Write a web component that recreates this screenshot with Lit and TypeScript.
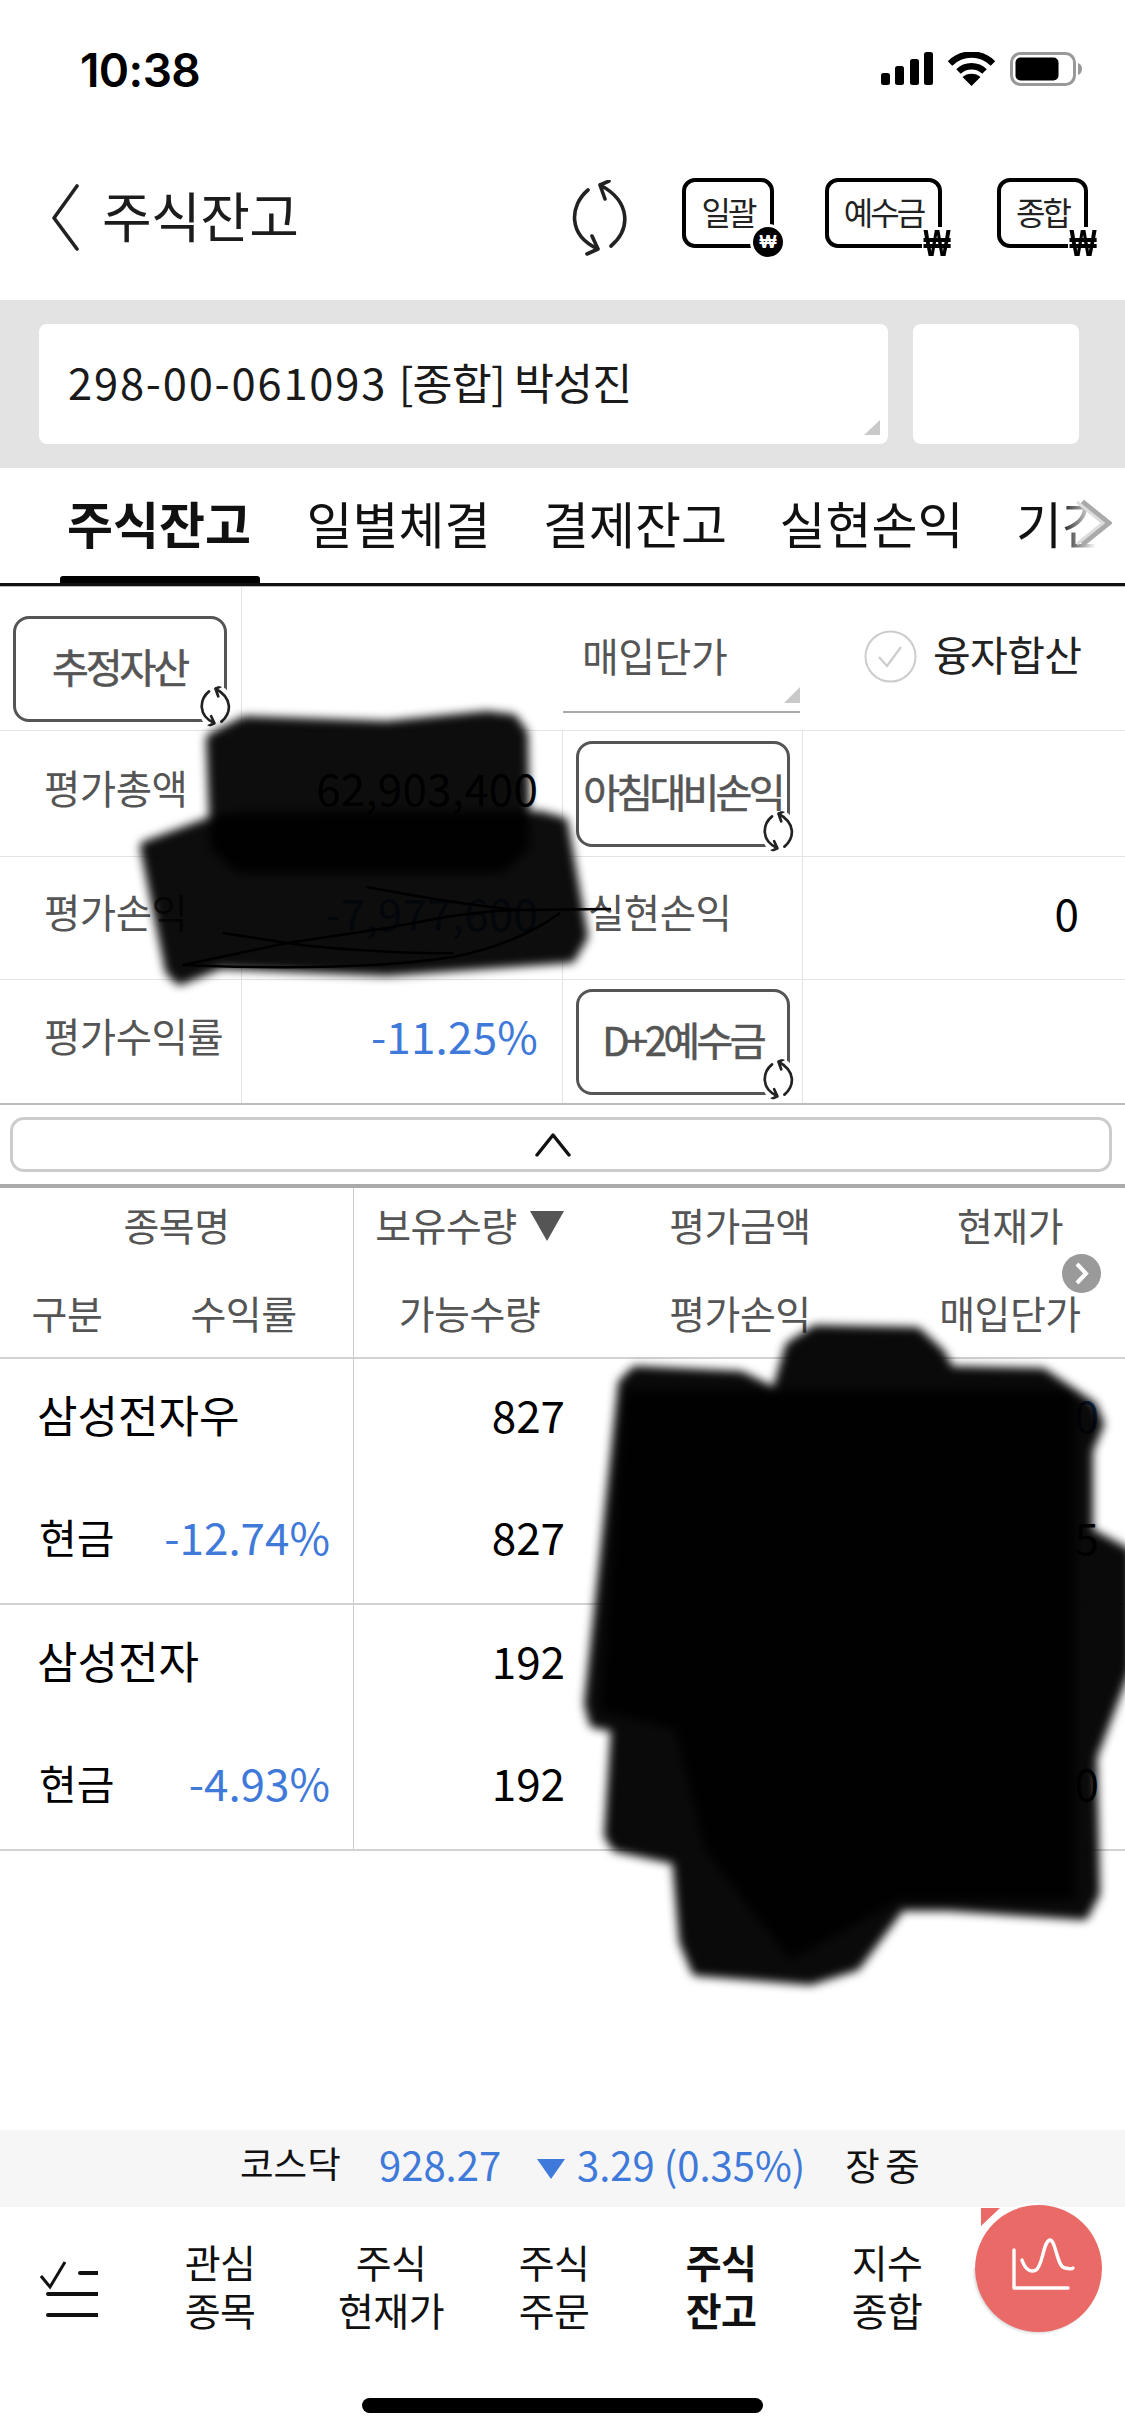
import { LitElement, html, css, svg } from "lit";
import { customElement } from "lit/decorators.js";

const refresh = svg`<path d="M16 10C-2 25-5 55 26 69M15 74L26 69L20 56M39 66C58 50 60 22 28 5M37 1L28 5L33 19" fill="none" stroke="#222" stroke-width="3.6" stroke-linecap="round" stroke-linejoin="round"/>`;

const tabs = ["주식잔고", "일별체결", "결제잔고", "실현손익", "기간손익"];
const navItems = [
  ["관심", "종목", false],
  ["주식", "현재가", false],
  ["주식", "주문", false],
  ["주식", "잔고", true],
  ["지수", "종합", false],
] as const;
const rows = [
  { name: "삼성전자우", kind: "현금", rate: "-12.74%", qty: "827", tail: ["0", "5"], blue: true },
  { name: "삼성전자", kind: "현금", rate: "-4.93%", qty: "192", tail: ["", "0"], blue: false },
];

@customElement("app-root")
export class AppRoot extends LitElement {
  static styles = css`
    :host {
      display: block;
      width: 1125px;
      height: 2436px;
      position: relative;
      overflow: hidden;
      background: #fff;
      font-family: "Noto Sans CJK KR", "Noto Sans", sans-serif;
      color: #111;
      line-height: 1;
    }
    * { box-sizing: border-box; }
    .page { display: flex; flex-direction: column; height: 100%; }

    .status { height: 135px; display: flex; justify-content: space-between; padding: 47px 43px 0 80px; flex: none; }
    .time { font: 600 46px/1 Inter, "Liberation Sans", sans-serif; letter-spacing: -0.6px; color: #000; }
    .sicons { display: flex; align-items: flex-start; gap: 15px; padding-top: 5px; }

    .nav { height: 165px; flex: none; display: flex; align-items: center; padding: 0 37px 0 52px; }
    .back { width: 27px; height: 67px; margin-right: 23px; }
    .title { font-size: 54px; letter-spacing: -0.6px; color: #1c1c1c; flex: 1; padding-bottom: 6px; }
    .rf { width: 56px; height: 76px; display: block; }
    .hb {
      height: 70px; border: 4px solid #000; border-radius: 13px; position: relative;
      display: flex; align-items: center; justify-content: center; font-size: 32px; color: #222; letter-spacing: -3px;
      margin-top: -10px; padding-bottom: 4px;
    }
    .b1 { width: 92px; margin-left: 54px; }
    .b2 { width: 117px; margin-left: 51px; }
    .b3 { width: 91px; margin-left: 55px; }
    .won {
      position: absolute; right: -14px; bottom: -15px; background: #fff; letter-spacing: 0;
      width: 30px; height: 32px; text-align: center;
      font: 700 25px/32px "Liberation Sans", sans-serif; color: #000;
    }
    .won b { display: block; transform: scale(1.15, 1.45); font-weight: 700; }
    .coin {
      position: absolute; right: -13px; bottom: -13px; width: 30px; height: 30px; border-radius: 50%; background: #000; letter-spacing: 0;
      color: #fff; font: 700 18px/30px "Liberation Sans", sans-serif; text-align: center; box-shadow: 0 0 0 3px #fff;
    }

    .acct { height: 168px; flex: none; background: #e3e3e3; display: flex; gap: 25px; padding: 24px 46px 24px 39px; }
    .field { background: #fff; border-radius: 8px; position: relative; }
    .f1 { flex: 1; display: flex; align-items: center; padding: 0 0 5px 29px; font-size: 43.5px; color: #1a1a1a; white-space: pre; }
    .f1 .d { letter-spacing: 1.8px; }
    .f1 .h { letter-spacing: -0.8px; }
    .f2 { width: 166px; }
    .tri { position: absolute; width: 0; height: 0; border-style: solid; border-color: transparent transparent #c9c9c9 transparent; }
    .f1 .tri { right: 8px; bottom: 9px; border-width: 0 0 15px 16px; }

    .tabs {
      height: 118px; flex: none; border-bottom: 3px solid #111; position: relative; overflow: hidden;
      display: flex; align-items: flex-start; gap: 52.5px; padding: 29px 0 0 67px; font-size: 50px; color: #111; white-space: nowrap;
    }
    .tabs span { flex: none; width: 184px; }
    .tabs .on { font-weight: 700; margin-right: 3px; }
    .ul { position: absolute; left: 60px; width: 200px; bottom: 0; height: 7px; background: #000; border-radius: 3px 3px 0 0; }
    .fade { position: absolute; right: 0; top: 0; bottom: 0; width: 65px; background: linear-gradient(90deg, rgba(255, 255, 255, 0), #fff 55%); }
    .chev { position: absolute; left: 1074px; top: 32px; width: 38px; height: 46px; }

    .sum {
      flex: none; border-top: 1px solid #bbb; display: grid;
      grid-template-columns: 242px 321px 240px 322px; grid-template-rows: 144px 126px 123px 123px;
      border-bottom: 2px solid #bbb;
    }
    .c {
      border-bottom: 1px solid #e4e4e4; border-right: 1px solid #e4e4e4; display: flex; align-items: center; position: relative;
      font-size: 39.5px; color: #555; letter-spacing: -0.5px;
    }
    .c.nb { border-right: none; }
    .c.lastrow { border-bottom: none; }
    .c.lab { padding: 0 0 14px 44px; }
    .c.lab2 { padding: 0 0 14px 25px; }
    .c.val { justify-content: flex-end; padding: 0 24px 13px 0; font-size: 44px; color: #000; letter-spacing: 0.2px; }
    .c.val.z { padding-right: 46px; }
    .blue { color: #3f79d9 !important; }
    .dim { color: #2a5bb0; }
    .c.mid { justify-content: center; }
    .btn {
      border: 3px solid #555; border-radius: 16px; width: 214px; height: 106px; position: relative; display: flex;
      align-items: center; justify-content: center; background: #fff; color: #555; font-size: 40px; letter-spacing: -3px;
      -webkit-text-stroke: 0.6px #555; padding-bottom: 6px; white-space: nowrap;
    }
    .btn .rf { position: absolute; width: 31px; height: 41px; right: -7px; bottom: -8px; background: #fff; border-radius: 14px; }
    .btn .rf path { stroke-width: 5; }
    .narrow { letter-spacing: -3.7px; }
    .d2 { letter-spacing: -3.6px; }
    .first { padding: 20px 2px 0 0; }
    .sel .inner { position: absolute; left: 0; right: 3px; top: 45px; height: 81px; border-bottom: 2px solid #aaa; padding: 3px 0 0 19px; font-size: 40px; }
    .sel .tri { right: 0; bottom: 8px; border-width: 0 0 16px 16px; }
    .chk { padding: 0 0 4px 61px; color: #222; font-size: 41px; gap: 16px; letter-spacing: -0.6px; }
    .chk span { padding-bottom: 6px; }
    .circ { width: 53px; height: 53px; display: block; flex: none; }

    .strip { flex: none; height: 79px; padding: 12px 13px 12px 10px; }
    .strip div { height: 55px; border: 3px solid #ccc; border-radius: 14px; display: flex; align-items: center; justify-content: center; padding-right: 16px; }
    .thick { flex: none; height: 4px; background: #aaa; }

    .thead, .tr { display: grid; grid-template-columns: 354px 231px 310px 230px; flex: none; }
    .thead { height: 171px; border-bottom: 2px solid #d2d2d2; position: relative; }
    .th { display: grid; grid-template-rows: 84px 84px; align-items: center; justify-items: center; font-size: 39px; color: #555; letter-spacing: -0.5px; }
    .th > * { padding-bottom: 12px; }
    .th > * + * { padding-bottom: 6px; margin-top: 2px; }
    .th.left { border-right: 1px solid #ccc; }
    .two { display: grid; grid-template-columns: 134px 1fr; justify-items: center; width: 100%; }
    .sort { display: flex; align-items: center; gap: 13px; white-space: nowrap; }
    .down { width: 34px; height: 30px; display: block; margin-top: 4px; }
    .more { position: absolute; left: 1062px; top: 66px; width: 39px; height: 39px; }

    .tr { height: 246px; border-bottom: 2px solid #d2d2d2; }
    .td { display: grid; grid-template-rows: 122px 122px; align-items: center; font-size: 44px; color: #000; }
    .td > * { padding-bottom: 12px; }
    .td.left { border-right: 1px solid #ccc; }
    .nm { padding-left: 37px; letter-spacing: 0; }
    .kr { display: flex; justify-content: space-between; padding: 0 23px 12px 39px; align-items: center; }
    .kr b { font-weight: 400; font-size: 41px; }
    .num { text-align: right; padding-right: 20px; }
    .tail { text-align: right; padding-right: 26px; }

    .spacer { flex: 1; }
    .index {
      flex: none; height: 77px; background: #f6f6f6; display: flex; align-items: center; font-size: 38px; color: #111; padding: 0 0 10px 240px; white-space: nowrap;
    }
    .index .k { font-size: 36.5px; width: 139px; }
    .index .v { color: #3f79d9; font-size: 40px; }
    .index .p { width: 158px; }
    .index .dn { width: 28px; height: 20px; margin-right: 12px; margin-top: 10px; display: block; }
    .index .s { margin-left: 40px; font-size: 37.5px; word-spacing: -3px; }

    .bnav { flex: none; height: 163px; display: grid; grid-template-columns: 135px 170px 172px 154px 180px 152px; align-items: center; }
    .menu { width: 58px; height: 56px; margin-left: 40px; display: block; }
    .ni { text-align: center; font-size: 39px; color: #111; letter-spacing: -0.6px; padding-bottom: 8px; }
    .ni span { display: block; height: 48px; line-height: 48px; }
    .ni.on { font-weight: 700; }
    .homearea { flex: none; height: 66px; padding-top: 28px; display: flex; justify-content: center; }
    .home { width: 401px; height: 15px; border-radius: 8px; background: #000; }

    .fab { position: absolute; left: 975px; top: 2205px; width: 127px; height: 127px; display: block; overflow: visible; }
    .fabtri { position: absolute; left: 981px; top: 2208px; width: 0; height: 0; border-style: solid; border-width: 18px 19px 0 0; border-color: #ea6a68 transparent transparent transparent; }
    .ink { position: absolute; left: 0; top: 0; width: 1125px; height: 2436px; pointer-events: none; }
  `;

  private rfIcon() {
    return html`<svg class="rf" viewBox="0 0 56 76">${refresh}</svg>`;
  }

  render() {
    return html`
      <div class="page">
        <div class="status">
          <div class="time">10:38</div>
          <div class="sicons">
            <svg width="52" height="33" viewBox="0 0 52 33">
              <rect x="0" y="21" width="9" height="12" rx="2.5"/><rect x="14" y="14" width="9" height="19" rx="2.5"/>
              <rect x="29" y="7" width="9" height="26" rx="2.5"/><rect x="43" y="0" width="9" height="33" rx="2.5"/>
            </svg>
            <svg width="47" height="34" viewBox="0 0 47 34">
              <path d="M2 11.5C14-0.5 33-0.5 45 11.5" fill="none" stroke="#000" stroke-width="6.4"/>
              <path d="M10.5 19.5C17.5 12.5 29.5 12.5 36.5 19.5" fill="none" stroke="#000" stroke-width="6.4"/>
              <path d="M23.5 34L14.5 25C19 20.5 28 20.5 32.5 25Z"/>
            </svg>
            <svg width="72" height="34" viewBox="0 0 72 34">
              <rect x="1.5" y="1.5" width="63" height="31" rx="9" fill="none" stroke="#999" stroke-width="3"/>
              <rect x="5.5" y="5.5" width="43" height="23" rx="5"/>
              <path d="M68 11C71 12 72 14.5 72 17C72 19.5 71 22 68 23Z" fill="#999"/>
            </svg>
          </div>
        </div>

        <div class="nav">
          <svg class="back" viewBox="0 0 27 67"><path d="M25 2L2 34L25 65" fill="none" stroke="#222" stroke-width="3.6" stroke-linecap="round" stroke-linejoin="round"/></svg>
          <div class="title">주식잔고</div>
          ${this.rfIcon()}
          <div class="hb b1">일괄<span class="coin">₩</span></div>
          <div class="hb b2">예수금<span class="won"><b>₩</b></span></div>
          <div class="hb b3">종합<span class="won"><b>₩</b></span></div>
        </div>

        <div class="acct">
          <div class="field f1"><span class="d">298-00-061093 </span><span class="h">[종합] 박성진</span><i class="tri"></i></div>
          <div class="field f2"></div>
        </div>

        <div class="tabs">
          ${tabs.map((t, i) => html`<span class=${i === 0 ? "on" : ""}>${t}</span>`)}
          <i class="ul"></i>
          <i class="fade"></i>
          <svg class="chev" viewBox="0 0 38 46"><path d="M8 2L34 23L8 44" fill="none" stroke="#aaa" stroke-width="6"/><path d="M3 2L29 23L3 44" fill="none" stroke="#ddd" stroke-width="3"/></svg>
        </div>

        <div class="sum">
          <div class="c mid first"><div class="btn">추정자산${this.rfIcon()}</div></div>
          <div class="c nb"></div>
          <div class="c nb sel"><div class="inner">매입단가<i class="tri"></i></div></div>
          <div class="c nb chk">
            <svg class="circ" viewBox="0 0 53 53"><circle cx="26.5" cy="26.5" r="25" fill="none" stroke="#ccc" stroke-width="2"/><path d="M15 27L23 36L37 17" fill="none" stroke="#ccc" stroke-width="2.2"/></svg>
            <span>융자합산</span>
          </div>

          <div class="c lab">평가총액</div>
          <div class="c val">62,903,400</div>
          <div class="c mid"><div class="btn narrow">아침대비손익${this.rfIcon()}</div></div>
          <div class="c nb"></div>

          <div class="c lab">평가손익</div>
          <div class="c val blue">-7,977,600</div>
          <div class="c lab2">실현손익</div>
          <div class="c nb val z">0</div>

          <div class="c lab lastrow">평가수익률</div>
          <div class="c val blue lastrow">-11.25%</div>
          <div class="c mid lastrow"><div class="btn d2">D+2예수금${this.rfIcon()}</div></div>
          <div class="c nb lastrow"></div>
        </div>

        <div class="strip"><div>
          <svg width="36" height="24" viewBox="0 0 36 24"><path d="M2 22L18 2L34 22" fill="none" stroke="#111" stroke-width="3.4" stroke-linecap="round" stroke-linejoin="round"/></svg>
        </div></div>
        <div class="thick"></div>

        <div class="thead">
          <div class="th left">
            <div>종목명</div>
            <div class="two"><span>구분</span><span>수익률</span></div>
          </div>
          <div class="th">
            <div class="sort">보유수량<svg class="down" viewBox="0 0 34 30"><path d="M0 0H34L17 30Z" fill="#555"/></svg></div>
            <div>가능수량</div>
          </div>
          <div class="th"><div>평가금액</div><div>평가손익</div></div>
          <div class="th"><div>현재가</div><div>매입단가</div></div>
          <svg class="more" viewBox="0 0 39 39"><circle cx="19.5" cy="19.5" r="19.5" fill="#9a9a9a"/><path d="M15 10L24 19.5L15 29" fill="none" stroke="#fff" stroke-width="4"/></svg>
        </div>

        ${rows.map(
          (r) => html`<div class="tr">
            <div class="td left">
              <div class="nm">${r.name}</div>
              <div class="kr"><b>${r.kind}</b><span class="blue">${r.rate}</span></div>
            </div>
            <div class="td"><div class="num">${r.qty}</div><div class="num">${r.qty}</div></div>
            <div class="td"></div>
            <div class="td">
              <div class="tail ${r.blue ? "dim" : ""}">${r.tail[0]}</div>
              <div class="tail">${r.tail[1]}</div>
            </div>
          </div>`
        )}

        <div class="spacer"></div>

        <div class="index">
          <span class="k">코스닥</span>
          <span class="v p">928.27</span>
          <svg class="dn" viewBox="0 0 28 20"><path d="M0 0H28L14 20Z" fill="#3f79d9"/></svg>
          <span class="v">3.29 (0.35%)</span>
          <span class="s">장 중</span>
        </div>

        <div class="bnav">
          <svg class="menu" viewBox="0 0 58 56">
            <path d="M1 15L10 26L25 1" fill="none" stroke="#111" stroke-width="3"/>
            <path d="M40 12H58M8 33H58M8 54H58" fill="none" stroke="#111" stroke-width="4" stroke-linecap="round"/>
          </svg>
          ${navItems.map(
            ([a, b, on]) => html`<div class="ni ${on ? "on" : ""}"><span>${a}</span><span>${b}</span></div>`
          )}
        </div>
        <div class="homearea"><div class="home"></div></div>
      </div>

      <i class="fabtri"></i>
      <svg class="fab" viewBox="0 0 127 127">
        <defs><filter id="fs" x="-10%" y="-10%" width="120%" height="120%"><feGaussianBlur stdDeviation="1.6"/></filter></defs>
        <circle cx="62" cy="65" r="63" fill="#000" opacity=".18" filter="url(#fs)"/>
        <circle cx="63.5" cy="63.5" r="66" fill="#fff" clip-path="inset(0 50% 50% 0)"/>
        <circle cx="63.5" cy="63.5" r="63.5" fill="#ea6a68"/>
        <path d="M39 45V83H93" fill="none" stroke="#fff" stroke-width="3.4" stroke-linecap="round" stroke-linejoin="round"/>
        <path d="M47 55C50 64 55 68 61 65C68 61 68 36 75 35C81 35 82 63 90 63C94 64 97 64 98 63" fill="none" stroke="#fff" stroke-width="3.4" stroke-linecap="round"/>
      </svg>

      <svg class="ink" viewBox="0 0 1125 2436">
        <defs><filter id="bl" x="-10%" y="-10%" width="120%" height="120%"><feGaussianBlur stdDeviation="5"/></filter></defs>
        <g filter="url(#bl)" stroke="#000" stroke-width="12" stroke-linejoin="round">
          <path opacity=".95" d="M212 739L245 722L387 727L487 717L512 720L522 734L524 846L500 867L240 867L216 846Z"/>
          <path opacity=".95" d="M211 823L240 818L540 817L562 823L582 936L570 957L387 970L220 963L180 979L171 970L146 847Z"/>
          <path opacity=".96" d="M624 1384L636 1372L740 1377L777 1395L791 1347L816 1331L916 1333L939 1354L949 1372L1042 1374L1091 1407L1098 1424L1087 1450L1087 1533L1125 1553L1125 1667L1091 1757L1094 1893L1083 1914L949 1905L900 1905L855 1965L810 1979L697 1970L685 1941L678 1859L617 1846L610 1835L617 1726L595 1722L590 1704Z"/>
          <path opacity=".9" stroke-width="0" d="M625 1390L1075 1390L1075 1900L900 1900L790 1960L705 1850L675 1730L600 1710Z"/>
        </g>
        <path d="M367 887C400 893 460 905 520 910L610 909L520 910C470 911 430 920 387 928L287 943L183 965C280 969 380 968 453 957C490 950 530 935 560 913M223 933L287 943C320 948 400 954 453 953" fill="none" stroke="#000" stroke-width="2.4" stroke-linejoin="round"/>
      </svg>
    `;
  }
}
